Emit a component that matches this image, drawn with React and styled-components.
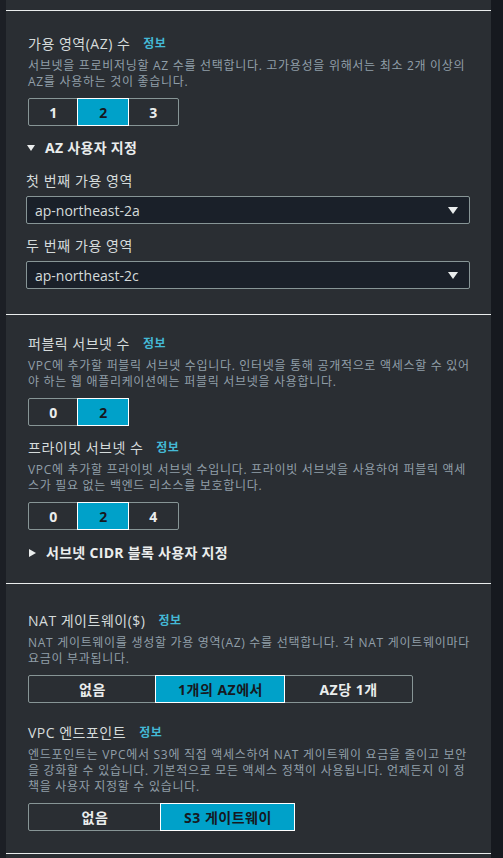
import React from "react";
import styled, { createGlobalStyle } from "styled-components";

const GlobalStyle = createGlobalStyle`
  body {
    margin: 0;
    background: #16191f;
    font-family: "Open Sans", "Noto Sans CJK KR", sans-serif;
  }
`;

const Page = styled.div`
  display: flex;
  padding-left: 6px;
  min-height: 858px;
  background: linear-gradient(to right, #1c1f25 6px, #16191f 6px);
`;

const Panel = styled.div`
  width: 485px;
  background: #2a2e33;
  padding-top: 10px;
`;

const Section = styled.div`
  border-top: 1px solid #eaeded;
  padding: ${(p) => p.$top}px 21px ${(p) => p.$bottom}px 22px;
  display: flex;
  flex-direction: column;
`;

const Field = styled.div`
  display: flex;
  flex-direction: column;
  margin-top: ${(p) => p.$gap || 0}px;
`;

const Title = styled.div`
  font-size: 14px;
  line-height: 20px;
  letter-spacing: 0.5px;
  color: #d5dbdb;
  display: flex;
  align-items: center;
  gap: 13px;
`;

const Info = styled.span`
  font-size: 12px;
  font-weight: 700;
  color: #44b9d6;
`;

const Desc = styled.div`
  margin-top: 4px;
  font-size: 12px;
  line-height: 16px;
  letter-spacing: 0.7px;
  color: #919fa9;
`;

const Segmented = styled.div`
  display: flex;
  margin-top: 8px;
  align-self: flex-start;
  border: 1px solid #879596;
  border-radius: 2px;
`;

const Segment = styled.div`
  width: ${(p) => p.$w}px;
  height: 26px;
  display: flex;
  align-items: center;
  justify-content: center;
  font-size: 14px;
  font-weight: 700;
  letter-spacing: 0.5px;
  color: ${(p) => (p.$on ? "#16191f" : "#eaeded")};
  background: ${(p) => (p.$on ? "#00a1c9" : "transparent")};
  outline: ${(p) => (p.$on ? "1px solid #ffffff" : "none")};
  position: relative;
  & + & {
    border-left: 1px solid ${(p) => (p.$on ? "transparent" : "#879596")};
  }
`;

const Expander = styled.div`
  display: flex;
  align-items: center;
  gap: 10px;
  margin-top: ${(p) => p.$gap}px;
  margin-left: ${(p) => p.$shift || 0}px;
  font-size: 14px;
  line-height: 20px;
  font-weight: 700;
  letter-spacing: 0.3px;
  color: #eaeded;
`;

const Caret = styled.svg`
  width: 8px;
  height: 8px;
  fill: #eaeded;
`;

const Label = styled.div`
  margin-top: ${(p) => p.$gap}px;
  margin-left: -2px;
  font-size: 14px;
  line-height: 20px;
  letter-spacing: 0.6px;
  color: #d5dbdb;
`;

const Select = styled.div`
  margin-top: 5px;
  margin-left: -2px;
  width: 444px;
  height: 28px;
  box-sizing: border-box;
  border: 1px solid #879596;
  border-radius: 2px;
  background: #1a2029;
  display: flex;
  align-items: center;
  justify-content: space-between;
  padding: 0 11px 0 8px;
  font-size: 14px;
  color: #d5dbdb;
`;

const SelectArrow = styled.svg`
  width: 10px;
  height: 7px;
  fill: #eaeded;
`;

const Down = () => (
  <SelectArrow viewBox="0 0 10 7">
    <polygon points="0,0 10,0 5,7" />
  </SelectArrow>
);

const Toggle = ({ open, children, gap, shift }) => (
  <Expander $gap={gap} $shift={shift}>
    <Caret viewBox="0 0 8 8">
      {open ? <polygon points="0,1 8,1 4,7" /> : <polygon points="1,0 8,4 1,8" />}
    </Caret>
    {children}
  </Expander>
);

const Options = ({ items, selected, w }) => (
  <Segmented>
    {items.map((it, i) => (
      <Segment key={it} $w={w} $on={i === selected}>
        {it}
      </Segment>
    ))}
  </Segmented>
);

const App = () => (
  <>
    <GlobalStyle />
    <Page>
      <Panel>
        <Section $top={23} $bottom={25}>
          <Field>
            <Title>
              가용 영역(AZ) 수 <Info>정보</Info>
            </Title>
            <Desc>
              서브넷을 프로비저닝할 AZ 수를 선택합니다. 고가용성을 위해서는 최소 2개 이상의 AZ를 사용하는 것이 좋습니다.
            </Desc>
            <Options items={["1", "2", "3"]} selected={1} w={49} />
          </Field>
          <Toggle open gap={12} shift={-1}>
            AZ 사용자 지정
          </Toggle>
          <Label $gap={13}>첫 번째 가용 영역</Label>
          <Select>
            ap-northeast-2a
            <Down />
          </Select>
          <Label $gap={12}>두 번째 가용 영역</Label>
          <Select>
            ap-northeast-2c
            <Down />
          </Select>
        </Section>

        <Section $top={19} $bottom={20}>
          <Field>
            <Title>
              퍼블릭 서브넷 수 <Info>정보</Info>
            </Title>
            <Desc>
              VPC에 추가할 퍼블릭 서브넷 수입니다. 인터넷을 통해 공개적으로 액세스할 수 있어야 하는 웹 애플리케이션에는 퍼블릭 서브넷을 사용합니다.
            </Desc>
            <Options items={["0", "2"]} selected={1} w={49} />
          </Field>
          <Field $gap={12}>
            <Title>
              프라이빗 서브넷 수 <Info>정보</Info>
            </Title>
            <Desc>
              VPC에 추가할 프라이빗 서브넷 수입니다. 프라이빗 서브넷을 사용하여 퍼블릭 액세스가 필요 없는 백엔드 리소스를 보호합니다.
            </Desc>
            <Options items={["0", "2", "4"]} selected={1} w={49} />
          </Field>
          <Toggle gap={13}>서브넷 CIDR 블록 사용자 지정</Toggle>
        </Section>

        <Section $top={27} $bottom={22}>
          <Field>
            <Title>
              NAT 게이트웨이($) <Info>정보</Info>
            </Title>
            <Desc>
              NAT 게이트웨이를 생성할 가용 영역(AZ) 수를 선택합니다. 각 NAT 게이트웨이마다 요금이 부과됩니다.
            </Desc>
            <Options items={["없음", "1개의 AZ에서", "AZ당 1개"]} selected={1} w={127} />
          </Field>
          <Field $gap={20}>
            <Title>
              VPC 엔드포인트 <Info>정보</Info>
            </Title>
            <Desc>
              엔드포인트는 VPC에서 S3에 직접 액세스하여 NAT 게이트웨이 요금을 줄이고 보안을 강화할 수 있습니다. 기본적으로 모든 액세스 정책이 사용됩니다. 언제든지 이 정책을 사용자 지정할 수 있습니다.
            </Desc>
            <Options items={["없음", "S3 게이트웨이"]} selected={1} w={132} />
          </Field>
        </Section>
        <Section $top={4} $bottom={0} />
      </Panel>
    </Page>
  </>
);

export default App;
